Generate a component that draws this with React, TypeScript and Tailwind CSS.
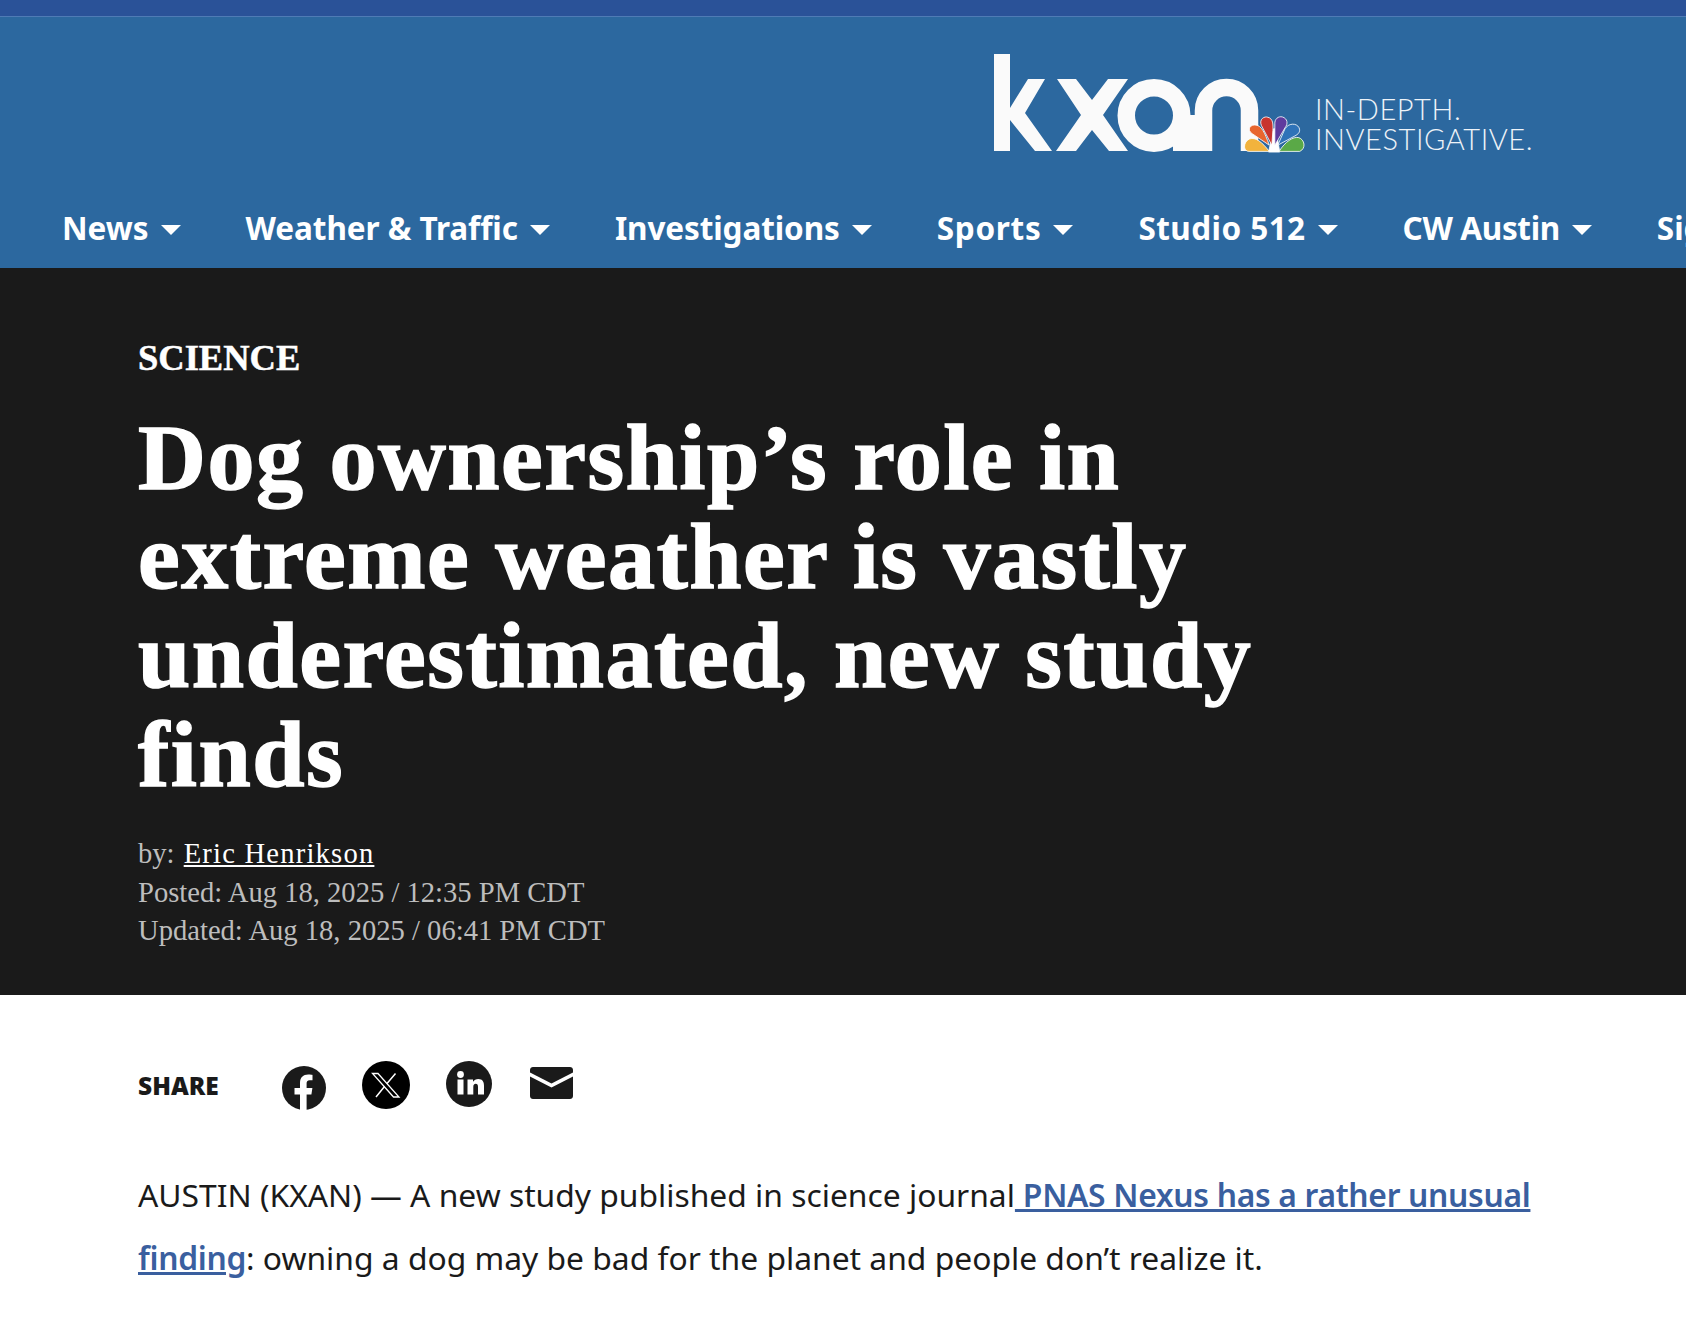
const nav = [
  { label: "News", track: "" },
  { label: "Weather & Traffic", track: "tracking-[-0.07px]" },
  { label: "Investigations", track: "tracking-[-0.1px]" },
  { label: "Sports", track: "tracking-[0.7px]" },
  { label: "Studio 512", track: "tracking-[0.43px]" },
  { label: "CW Austin", track: "tracking-[-0.36px]" },
  { label: "Sign In", track: "" },
];

function Logo() {
  return (
    <svg width="320" height="110" viewBox="990 50 320 110" className="block shrink-0">
      <g fill="#fafafa">
        <rect x="994" y="54" width="16" height="97" />
        <polygon points="1028,79 1045,79 1025,113 1052,151 1035,151 1010,120 1010,108" />
        <polygon points="1057,79 1076,79 1092,100 1108,79 1128,79 1103,115 1128,151 1109,151 1092,130 1076,151 1056,151 1081,115" />
        <rect x="1173" y="115" width="24" height="36" />
      </g>
      <g fill="none" stroke="#fafafa" strokeWidth="17.5">
        <circle cx="1154" cy="115.5" r="27.75" />
        <path d="M1203.5 151V110.5A23 23 0 0 1 1249.5 110.5V151" />
      </g>
      <svg x="1243" y="115" width="63" height="38" viewBox="112 74 192 114">
        <g stroke="#fff" strokeWidth="2.5">
          <path d="M205 115L190 186H224L212 115Z" fill="#fff" />
          <path d="M192 184H130C112 184 112 155 132 146C150 140 170 155 192 184Z" fill="#f2b33d" />
          <path d="M192 165L140 130C122 118 135 100 152 104C168 106 178 125 192 165Z" fill="#e8662e" />
          <path d="M200 165L168 105C160 85 178 76 188 80C204 84 204 102 203 120Z" fill="#c8342d" />
          <path d="M209 165L209 100C208 85 220 76 232 79C248 84 250 100 240 112Z" fill="#5f3b9e" />
          <path d="M218 165L240 115C250 98 275 96 283 112C288 125 280 132 270 137Z" fill="#2f73b8" />
          <path d="M222 184C240 155 265 138 282 142C300 148 305 175 285 184Z" fill="#5aa947" />
        </g>
      </svg>
    </svg>
  );
}

function Caret() {
  return <span className="w-0 h-0 border-x-[10.5px] border-x-transparent border-t-[10px] border-t-white mt-[3px]" />;
}

function Facebook() {
  return (
    <svg width="44" height="44" viewBox="0 0 44 44" className="mt-[5px]">
      <circle cx="22" cy="22" r="22" fill="#1a1a1a" />
      <path d="M18 44V28.5H12.5V22H18V17C18 11.5 21.2 8.6 26.2 8.6C28.5 8.6 30.5 9 30.5 9V14.3H27.8C25.2 14.3 24.6 15.8 24.6 17.5V22H30.4L29.4 28.5H24.6V44Z" fill="#fff" />
    </svg>
  );
}

function XLogo() {
  return (
    <svg width="48" height="48" viewBox="0 0 48 48">
      <circle cx="24" cy="24" r="24" fill="#000" />
      <path d="M13.5 12.5L34.5 36H29L8 12.5Z" transform="translate(2.5 0)" fill="none" stroke="#fff" strokeWidth="1.3" />
      <path d="M33.5 12.5L25 22.5M22.5 25.5L14 36" stroke="#fff" strokeWidth="1.5" fill="none" />
    </svg>
  );
}

function LinkedIn() {
  return (
    <svg width="46" height="46" viewBox="0 0 46 46">
      <circle cx="23" cy="23" r="23" fill="#1a1a1a" />
      <circle cx="14.5" cy="13.5" r="3.4" fill="#fff" />
      <rect x="11.5" y="18.5" width="6" height="15" fill="#fff" />
      <path d="M21.5 18.5H27V20.8C28 19.1 30 18 32.3 18C36.6 18 38 20.8 38 24.8V33.5H32V25.9C32 24 31.3 22.8 29.7 22.8C28 22.8 27.3 24.1 27.3 25.9V33.5H21.5Z" fill="#fff" />
    </svg>
  );
}

function Mail() {
  return (
    <svg width="43" height="32" viewBox="0 0 43 32" className="mt-[6px]">
      <path d="M3 0H40C41.6 0 43 1.2 43 3V5.6L21.5 16.5L0 5.6V3C0 1.2 1.4 0 3 0Z" fill="#1a1a1a" />
      <path d="M0 9.6L21.5 20.6L43 9.6V29C43 30.8 41.6 32 40 32H3C1.4 32 0 30.8 0 29Z" fill="#1a1a1a" />
    </svg>
  );
}

export default function App() {
  return (
    <div className="min-h-[1320px] h-[1320px] bg-white overflow-hidden">
      <div className="h-[17px] bg-[#2a5298] border-b border-[#4f7bb5]" />
      <header className="h-[251px] bg-[#2c689f] overflow-hidden">
        <div className="h-[187px] pt-[33px] pl-[990px] flex items-start">
          <Logo />
          <div className="ml-[5px] mt-[44px] font-['Lato'] font-light text-[29px] leading-[30px] text-[#eef3f8] tracking-[0.55px] whitespace-nowrap">
            <div>IN-DEPTH.</div>
            <div>INVESTIGATIVE.</div>
          </div>
        </div>
        <nav className="flex pl-[62px] gap-[65px] font-['Noto_Sans'] font-bold text-white text-[31.5px] leading-[48px] whitespace-nowrap">
          {nav.map((n) => (
            <span key={n.label} className={`flex items-center gap-[12px] ${n.track}`}>
              {n.label}
              <Caret />
            </span>
          ))}
        </nav>
      </header>
      <section className="h-[727px] bg-[#1a1a1a] pl-[138px] pt-[68px] font-['Liberation_Serif'] text-white">
        <div className="text-[36.5px] font-bold leading-[44px] [-webkit-text-stroke:0.5px_white]">SCIENCE</div>
        <h1 className="text-[94px] font-bold leading-[99px] tracking-[1.5px] w-[1200px] mt-[28px] [-webkit-text-stroke:1.5px_white]">
          Dog ownership’s role in extreme weather is vastly underestimated, new study finds
        </h1>
        <div className="mt-[31px] text-[28.6px] leading-[38.5px] text-[#bdbdbd]">
          <div>
            by: <span className="ml-[2px] text-white underline tracking-[1.2px]">Eric Henrikson</span>
          </div>
          <div>Posted: Aug 18, 2025 / 12:35 PM CDT</div>
          <div>Updated: Aug 18, 2025 / 06:41 PM CDT</div>
        </div>
      </section>
      <section className="pl-[138px] pt-[66px] font-['Noto_Sans'] text-[#1a1a1a]">
        <div className="flex items-start h-[48px]">
          <span className="w-[144px] font-black text-[24.5px] leading-[48px] mt-[1px]">SHARE</span>
          <div className="flex items-start">
            <span className="mr-[36px]"><Facebook /></span>
            <span className="mr-[36px]"><XLogo /></span>
            <span className="mr-[38px]"><LinkedIn /></span>
            <Mail />
          </div>
        </div>
        <p className="mt-[54px] w-[1420px] text-[31.8px] leading-[63px]">
          AUSTIN (KXAN) — A new study published in science journal
          <a className="text-[#3a5f9f] font-semibold underline tracking-[-0.3px]"> PNAS Nexus has a rather unusual finding</a>
          : owning a dog may be bad for the planet and people don’t realize it.
        </p>
      </section>
    </div>
  );
}
